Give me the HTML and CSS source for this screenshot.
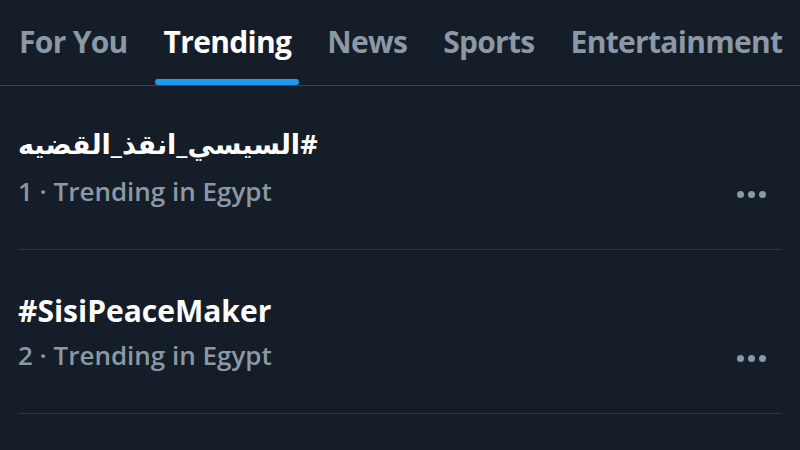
FILE: index.html
```html
<!DOCTYPE html>
<html lang="en">
<head>
    <meta charset="UTF-8">
    <title>Trending</title>
    <link rel="stylesheet" href="styles.css">
</head>
<body>
    <div class="tabs">
        <div class="tab">For You</div>
        <div class="tab active">Trending<span class="bar"></span></div>
        <div class="tab">News</div>
        <div class="tab">Sports</div>
        <div class="tab">Entertainment</div>
    </div>

    <div class="trend">
        <div class="trend-text">
            <div class="tag arabic" dir="rtl">#السيسي_انقذ_القضيه</div>
            <div class="meta">1 · Trending in Egypt</div>
        </div>
        <div class="more"><span></span><span></span><span></span></div>
    </div>

    <div class="trend">
        <div class="trend-text">
            <div class="tag">#SisiPeaceMaker</div>
            <div class="meta">2 · Trending in Egypt</div>
        </div>
        <div class="more"><span></span><span></span><span></span></div>
    </div>
</body>
</html>
```
FILE: styles.css
```css
body {
    font-family: "Open Sans", "DejaVu Sans", sans-serif;
    background-color: #151d28;
    color: #e7e9ea;
    margin: 0;
    padding: 0;
    width: 800px;
    height: 450px;
    overflow: hidden;
}

.tabs {
    display: flex;
    gap: 36px;
    padding: 0 19px;
    height: 85px;
    border-bottom: 1px solid #3a4350;
}

.tab {
    position: relative;
    font-size: 30px;
    font-weight: 700;
    letter-spacing: -0.7px;
    color: #8b98a5;
    padding-top: 21px;
    white-space: nowrap;
}

.tab.active {
    color: #ffffff;
}

.tab .bar {
    position: absolute;
    left: -9px;
    right: -8px;
    bottom: 0;
    height: 6px;
    border-radius: 3px;
    background-color: #1d9bf0;
}

.trend {
    display: flex;
    align-items: center;
    margin: 0 18px;
    height: 163px;
    border-bottom: 1px solid #2c3440;
}

.trend-text {
    flex: 1;
}

.tag {
    font-size: 30px;
    font-weight: 700;
    color: #ffffff;
    display: inline-block;
}

.tag.arabic {
    font-size: 27px;
    line-height: 36px;
    padding-bottom: 5px;
}

.meta {
    font-size: 26px;
    font-weight: 600;
    color: #8b98a5;
    margin-top: 6px;
}

.more {
    display: flex;
    gap: 4px;
    margin-right: 16px;
    margin-top: 54px;
}

.more span {
    width: 7px;
    height: 7px;
    border-radius: 50%;
    background-color: #8b98a5;
}
```
